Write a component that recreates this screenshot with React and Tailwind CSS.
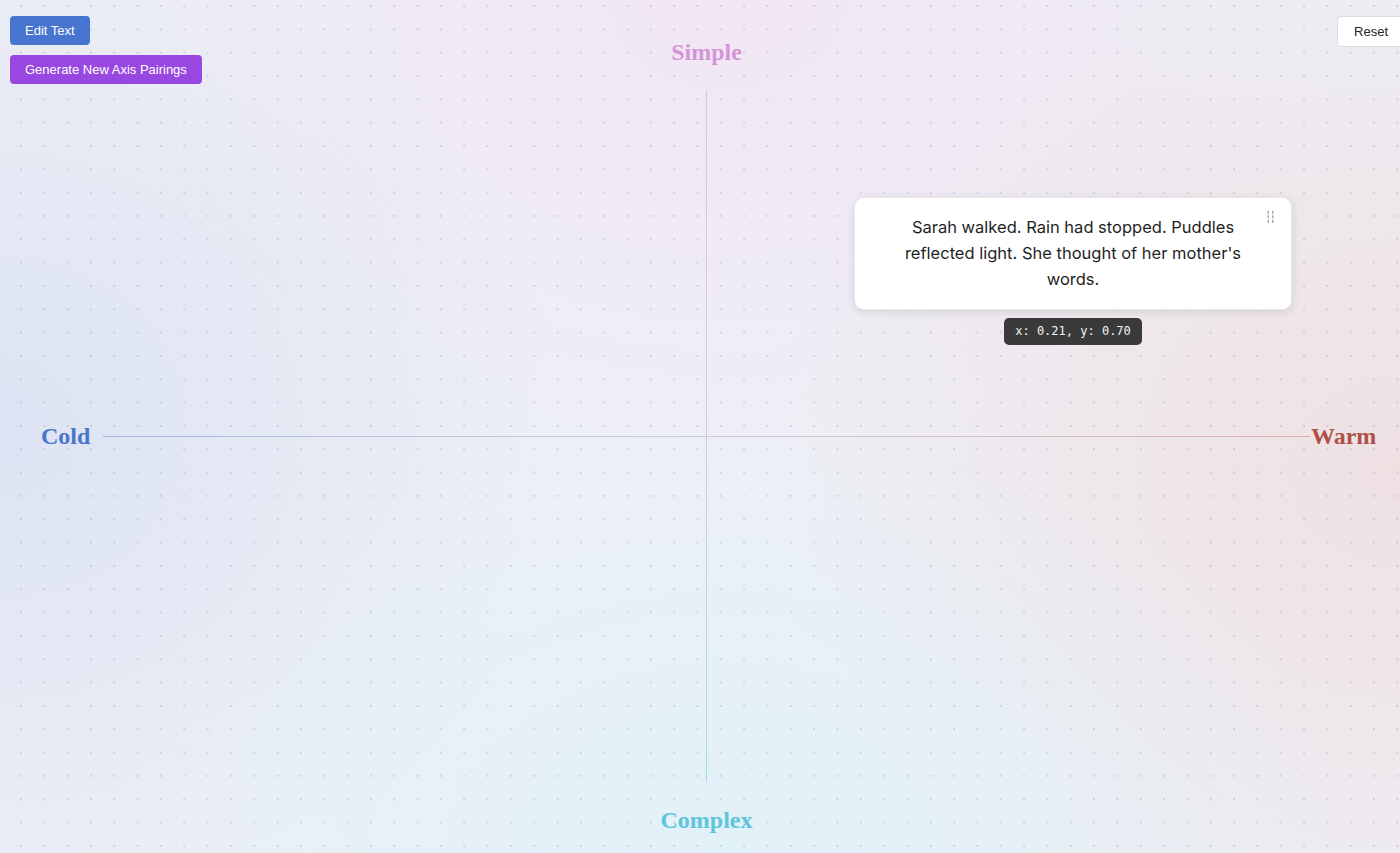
import React from 'react';

const serif = { fontFamily: '"Liberation Serif", "DejaVu Serif", serif' };

const Grip = () => (
  <svg width="9" height="15" viewBox="0 0 9 15" className="text-[#a9a9ad]">
    {[1.5, 6].map((x) =>
      [0.5, 5, 9.5].map((y) => (
        <rect key={`${x}-${y}`} x={x} y={y} width="1.5" height="3.6" rx="0.75" fill="currentColor" />
      ))
    )}
  </svg>
);

const AxisLabel = ({ className, children }) => (
  <div className={`text-[24px] font-bold leading-[24px] ${className}`} style={serif}>
    {children}
  </div>
);

const Passage = ({ text, coords }) => (
  <div className="absolute left-[751px] top-[107px] flex w-[438px] flex-col items-center">
    <div className="relative w-full rounded-[10px] border border-[#e8e8ea] bg-white px-10 pb-[17px] pt-[16px] shadow-[0_2px_10px_rgba(0,0,0,0.11)]">
      <p
        className="text-center text-[16.5px] leading-[26px] text-[#1f1f1f]"
        style={{ fontFamily: 'Inter, "Noto Sans", sans-serif' }}
      >
        {text}
      </p>
      <div className="absolute right-[16px] top-[12px]">
        <Grip />
      </div>
    </div>
    <div
      className="mt-2 rounded-[5px] bg-[#3a3a3a] px-[11px] py-[6px] text-[12px] leading-[15px] text-[#f2f2f2]"
      style={{ fontFamily: '"DejaVu Sans Mono", "Liberation Mono", monospace' }}
    >
      x: {coords.x.toFixed(2)}, y: {coords.y.toFixed(2)}
    </div>
  </div>
);

export default function App() {
  return (
    <div
      className="relative h-[853px] w-full overflow-hidden bg-[#edeff6]"
      style={{ fontFamily: '"Liberation Sans", Arial, sans-serif' }}
    >
      {/* soft colour washes toward each pole */}
      <div className="absolute inset-0 bg-[radial-gradient(ellipse_45%_55%_at_52%_0%,rgba(243,228,244,0.8),transparent)]" />
      <div className="absolute inset-0 bg-[radial-gradient(ellipse_40%_60%_at_0%_50%,rgba(218,225,242,0.85),transparent)]" />
      <div className="absolute inset-0 bg-[radial-gradient(ellipse_45%_65%_at_100%_55%,rgba(239,223,224,0.9),transparent)]" />
      <div className="absolute inset-0 bg-[radial-gradient(ellipse_45%_50%_at_52%_100%,rgba(224,242,248,0.95),transparent)]" />

      {/* dot grid */}
      <div className="absolute inset-0 bg-[radial-gradient(circle,rgba(140,146,165,0.3)_0.9px,transparent_1.2px)] bg-[length:23.33px_23.33px] bg-[position:9.3px_17.7px]" />

      {/* the plane: labels around a cross of axes */}
      <div className="relative grid grid-cols-[62px_1207px_auto] grid-rows-[24px_692px_24px] gap-y-[26px] pl-[41px] pt-[40px]">
        <AxisLabel className="col-start-2 justify-self-center text-[#d494d7]">Simple</AxisLabel>

        <AxisLabel className="col-start-1 row-start-2 self-center text-[#4a75cc]">Cold</AxisLabel>

        <div className="relative col-start-2 row-start-2 grid place-items-center">
          <div className="col-start-1 row-start-1 h-px w-full bg-[linear-gradient(to_right,rgba(90,130,210,0.45),rgba(175,175,190,0.5)_45%,rgba(175,170,175,0.5)_60%,rgba(195,115,105,0.45))]" />
          <div className="col-start-1 row-start-1 h-full w-px bg-[linear-gradient(to_bottom,rgba(215,165,215,0.55),rgba(180,175,190,0.55)_50%,rgba(115,200,220,0.55))]" />
          <Passage
            text="Sarah walked. Rain had stopped. Puddles reflected light. She thought of her mother's words."
            coords={{ x: 0.21, y: 0.7 }}
          />
        </div>

        <AxisLabel className="col-start-3 row-start-2 self-center pl-px text-[#ad5148]">Warm</AxisLabel>

        <AxisLabel className="col-start-2 row-start-3 justify-self-center text-[#5dc5dc]">Complex</AxisLabel>
      </div>

      {/* controls */}
      <div className="absolute inset-x-0 top-0 flex items-start justify-between pl-[10px] pt-4">
        <div className="flex flex-col items-start gap-[10px]">
          <button className="h-[29px] rounded-[4px] bg-[#4774cf] px-[15px] text-[13px] text-white">
            Edit Text
          </button>
          <button className="h-[29px] rounded-[4px] bg-[#9847e0] px-[15px] text-[13px] text-white">
            Generate New Axis Pairings
          </button>
        </div>
        <button className="-mr-[5px] h-[31px] rounded-[4px] border border-[#dcdcdc] bg-white px-4 text-[13px] text-[#222]">
          Reset
        </button>
      </div>
    </div>
  );
}
